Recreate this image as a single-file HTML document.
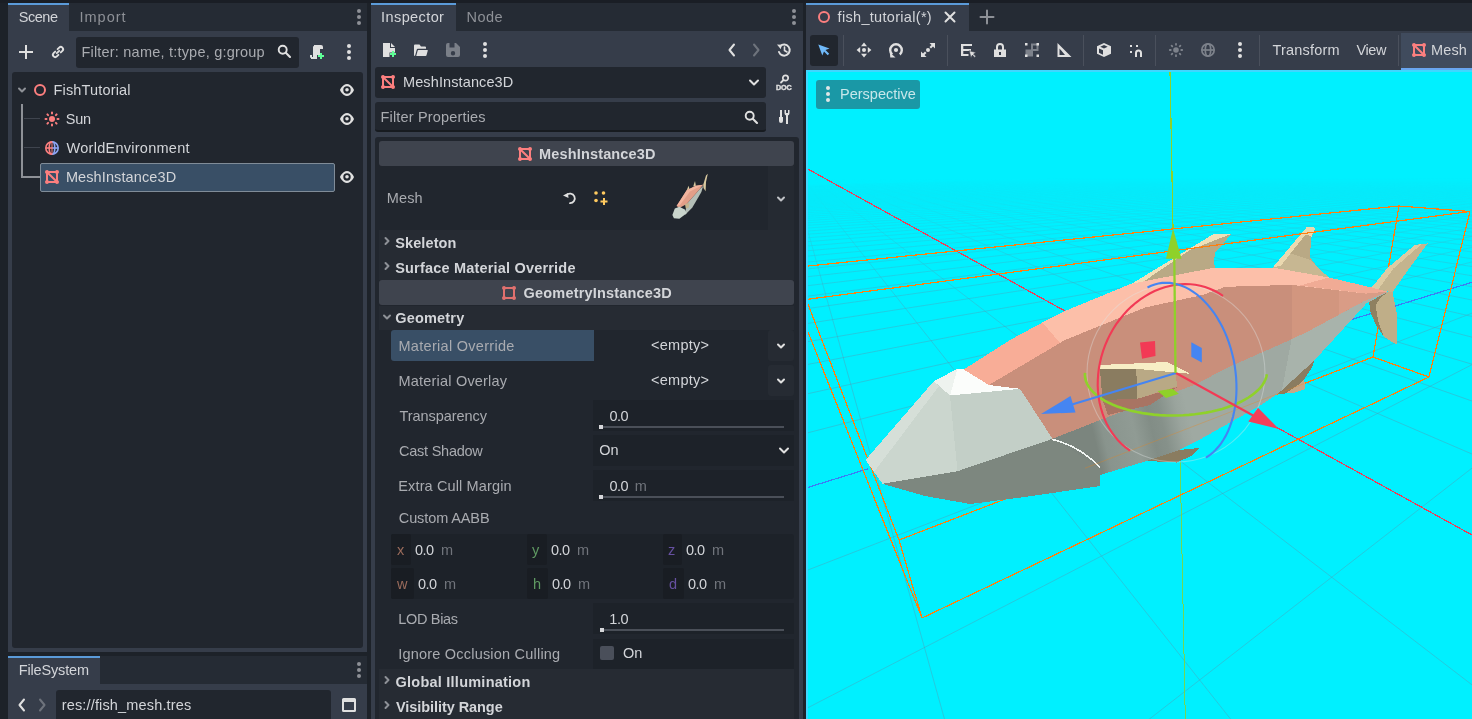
<!DOCTYPE html>
<html lang="en">
<head>
<meta charset="utf-8">
<title>fish_tutorial - Godot Engine</title>
<style>
*{box-sizing:border-box;margin:0;padding:0}
html,body{width:1472px;height:719px;overflow:hidden;background:#1d2229}
body{position:relative;font-family:"Liberation Sans","DejaVu Sans",sans-serif;font-size:14.5px;color:#d3d5d9}
.abs{position:absolute}
.t{position:absolute;white-space:nowrap;line-height:20px;height:20px}
.b{font-weight:bold}
.dim{color:#8e9197}
.lbl{color:#a9abb0}
.unit{color:#70747b}
.panel{position:absolute;background:#363d4a}
.dark{position:absolute;background:#21262e}
.tabbar{position:absolute;background:#252b34}
.tab{position:absolute;background:#363d4a;border-top:2px solid #5b9bd9}
.field{position:absolute;background:#21262e;border-radius:3px}
.val{position:absolute;background:#1d2229}
.cat{position:absolute;background:#3f444e;border-radius:3px}
.sec{position:absolute;background:#262b33}
.axl{position:absolute;background:#191d23;border-radius:2px}
.sl{position:absolute;height:2px;background:#4a4f58}
.gr{position:absolute;width:4px;height:4px;background:#d6d7da}
svg{position:absolute;overflow:visible}
svg.ic{width:16px;height:16px}
</style>
</head>
<body>
<div id="root" style="position:absolute;left:0;top:0;width:1472px;height:719px;will-change:transform">
<!-- ================= LEFT DOCK : Scene ================= -->
<div class="abs" style="left:0;top:0;width:1472px;height:3px;background:#1a1e25"></div>
<div class="tabbar" style="left:8px;top:3px;width:359px;height:28px"></div>
<div class="tab" style="left:8px;top:3px;width:61px;height:28px"></div>
<span class="t" style="left:18.7px;top:7px;letter-spacing:-0.45px">Scene</span>
<span class="t dim" style="left:79.4px;top:7px;letter-spacing:1.03px">Import</span>
<svg class="ic" style="left:351px;top:9px" viewBox="0 0 16 16"><g fill="#8e9197"><circle cx="8" cy="1.900" r="2"/><circle cx="8" cy="8" r="2"/><circle cx="8" cy="14.100" r="2"/></g></svg>
<div class="panel" style="left:8px;top:31px;width:359px;height:621px"></div>
<!-- toolbar -->
<svg class="ic" style="left:18px;top:44px" viewBox="0 0 16 16"><path d="M7 1v6H1v2h6v6h2V9h6V7H9V1z" fill="#e0e0e0"/></svg>
<svg class="ic" style="left:50px;top:44px" viewBox="0 0 16 16"><g fill="none" stroke="#e0e0e0" stroke-width="1.900" stroke-linecap="round"><path d="M6.800 9.200 9.200 6.800"/><path d="M7.600 5.200 9.200 3.600a2.260 2.260 0 0 1 3.200 3.200L10.800 8.400"/><path d="M8.400 10.800 6.800 12.400A2.260 2.260 0 0 1 3.600 9.200L5.200 7.600"/></g></svg>
<div class="field" style="left:76px;top:37px;width:223px;height:31px"></div>
<span class="t lbl" style="left:81.4px;top:42px;letter-spacing:0.21px">Filter: name, t:type, g:group</span>
<svg class="ic" style="left:276px;top:43px" viewBox="0 0 16 16"><circle cx="6.7" cy="6.7" r="4" fill="none" stroke="#e0e0e0" stroke-width="1.9"/><path d="M9.8 9.8 14 14" stroke="#e0e0e0" stroke-width="2.1" stroke-linecap="round"/></svg>
<svg class="ic" style="left:308px;top:44px" viewBox="0 0 16 16"><path d="M6 1v1a1 1 0 0 0-1 1v10H4v-2H2v2a1 1 0 0 0 .5.87A1 1 0 0 0 3 14v1h6v-4h3V5h3V3a2 2 0 0 0-2-2z" fill="#e0e0e0"/><path d="M6 1a1 1 0 0 0-1 1v11H4v-2H2v2a1 1 0 0 0 1 1" fill="none"/><path d="M12 9v2h-2v2h2v2h2v-2h2v-2h-2V9z" fill="#5fff97"/></svg>
<svg class="ic" style="left:341px;top:44px" viewBox="0 0 16 16"><g fill="#e0e0e0"><circle cx="8" cy="2" r="2"/><circle cx="8" cy="8" r="2"/><circle cx="8" cy="14" r="2"/></g></svg>
<!-- tree -->
<div class="dark" style="left:12px;top:72px;width:351px;height:576px;border-radius:3px"></div>
<div class="abs" style="left:40px;top:163px;width:295px;height:29px;background:#394f66;border:1px solid #808c98;border-radius:2px"></div>
<!-- guides -->
<div class="abs" style="left:21px;top:104px;width:2px;height:74px;background:#8e9197"></div>
<div class="abs" style="left:21px;top:176px;width:19px;height:2px;background:#8e9197"></div>
<div class="abs" style="left:24px;top:118px;width:16px;height:1px;background:#3f444e"></div>
<div class="abs" style="left:24px;top:147px;width:16px;height:1px;background:#3f444e"></div>
<svg class="ic" style="left:14px;top:82px" viewBox="0 0 16 16"><path d="M5 6.500 8 9.500 11 6.500" fill="none" stroke="#8e9197" stroke-width="2" stroke-linecap="round" stroke-linejoin="round"/></svg>
<!-- node icons -->
<svg class="ic" style="left:32px;top:82px" viewBox="0 0 16 16"><circle cx="8" cy="8" r="5" fill="none" stroke="#fc7f7f" stroke-width="2"/></svg>
<svg class="ic" style="left:44px;top:111px" viewBox="0 0 16 16"><g fill="#fc7f7f"><circle cx="8" cy="8" r="3"/><g stroke="#fc7f7f" stroke-width="2" stroke-linecap="round"><path d="M8 1.5v1M8 13.5v1M1.5 8h1M13.5 8h1M3.4 3.4l.7.7M11.9 11.9l.7.7M3.4 12.6l.7-.7M11.9 4.1l.7-.7"/></g></g></svg>
<svg class="ic" style="left:44px;top:140px" viewBox="0 0 16 16"><defs><clipPath id="wl"><rect x="0" y="0" width="8" height="16"/></clipPath><clipPath id="wr"><rect x="8" y="0" width="8" height="16"/></clipPath></defs><g fill="none" stroke-width="1.6"><g stroke="#fc7f7f" clip-path="url(#wl)"><circle cx="8" cy="8" r="6.2"/><ellipse cx="8" cy="8" rx="2.8" ry="6.2"/><path d="M2 8h12"/></g><g stroke="#8da5f3" clip-path="url(#wr)"><circle cx="8" cy="8" r="6.2"/><ellipse cx="8" cy="8" rx="2.8" ry="6.2"/><path d="M2 8h12"/></g></g><path d="M8 1.5v13" stroke="#fc7f7f" stroke-width="1"/></svg>
<svg class="ic" style="left:44px;top:169px" viewBox="0 0 16 16"><path d="M3 1a2 2 0 0 0-2 2 2 2 0 0 0 1 1.7v6.6A2 2 0 0 0 1 13a2 2 0 0 0 2 2 2 2 0 0 0 1.7-1h6.6a2 2 0 0 0 1.7 1 2 2 0 0 0 2-2 2 2 0 0 0-1-1.7V4.7A2 2 0 0 0 15 3a2 2 0 0 0-2-2 2 2 0 0 0-1.7 1H4.7A2 2 0 0 0 3 1zm2.4 3h5.9a2 2 0 0 0 .7.7v5.9zM4 5.4 10.6 12H4.7a2 2 0 0 0-.7-.7z" fill="#fc7f7f"/></svg>
<span class="t" style="left:53.6px;top:80px;letter-spacing:0.15px">FishTutorial</span>
<span class="t" style="left:65.7px;top:109px;letter-spacing:-0.23px">Sun</span>
<span class="t" style="left:66.6px;top:138px;letter-spacing:0.26px">WorldEnvironment</span>
<span class="t" style="left:65.9px;top:167px;letter-spacing:0.11px">MeshInstance3D</span>
<!-- eyes -->
<svg class="ic" style="left:339px;top:82px" viewBox="0 0 16 16"><path d="M8 2C3.500 2 1 8 1 8s2.500 6 7 6 7-6 7-6-2.500-6-7-6zm0 2.300a3.700 3.700 0 0 1 0 7.400 3.700 3.700 0 0 1 0-7.400zm0 1.700a1.800 1.800 0 0 0 0 3.600 1.800 1.800 0 0 0 0-3.600z" fill="#e0e0e0"/></svg>
<svg class="ic" style="left:339px;top:111px" viewBox="0 0 16 16"><path d="M8 2C3.500 2 1 8 1 8s2.500 6 7 6 7-6 7-6-2.500-6-7-6zm0 2.300a3.700 3.700 0 0 1 0 7.400 3.700 3.700 0 0 1 0-7.400zm0 1.700a1.800 1.800 0 0 0 0 3.600 1.800 1.800 0 0 0 0-3.600z" fill="#e0e0e0"/></svg>
<svg class="ic" style="left:339px;top:169px" viewBox="0 0 16 16"><path d="M8 2C3.500 2 1 8 1 8s2.500 6 7 6 7-6 7-6-2.500-6-7-6zm0 2.300a3.700 3.700 0 0 1 0 7.400 3.700 3.700 0 0 1 0-7.400zm0 1.700a1.800 1.800 0 0 0 0 3.600 1.800 1.800 0 0 0 0-3.600z" fill="#e0e0e0"/></svg>

<!-- ================= LEFT DOCK : FileSystem ================= -->
<div class="tabbar" style="left:8px;top:656px;width:359px;height:28px"></div>
<div class="tab" style="left:8px;top:656px;width:92px;height:28px"></div>
<span class="t" style="left:18.8px;top:660px;letter-spacing:-0.17px">FileSystem</span>
<svg class="ic" style="left:351px;top:662px" viewBox="0 0 16 16"><g fill="#8e9197"><circle cx="8" cy="1.900" r="2"/><circle cx="8" cy="8" r="2"/><circle cx="8" cy="14.100" r="2"/></g></svg>
<div class="panel" style="left:8px;top:684px;width:359px;height:40px"></div>
<svg class="ic" style="left:14px;top:697px" viewBox="0 0 16 16"><path d="M10 2.500 5.500 8 10 13.500" fill="none" stroke="#e0e0e0" stroke-width="2" stroke-linecap="round" stroke-linejoin="round"/></svg>
<svg class="ic" style="left:34px;top:697px" viewBox="0 0 16 16"><path d="M6 2.500 10.500 8 6 13.500" fill="none" stroke="#6e737c" stroke-width="2" stroke-linecap="round" stroke-linejoin="round"/></svg>
<div class="field" style="left:56px;top:690px;width:275px;height:34px"></div>
<span class="t" style="left:61.7px;top:695px;letter-spacing:0.16px">res://fish_mesh.tres</span>
<svg class="ic" style="left:341px;top:697px" viewBox="0 0 16 16"><path d="M2.500 1h11A1.500 1.500 0 0 1 15 2.500v11a1.500 1.500 0 0 1-1.500 1.500h-11A1.500 1.500 0 0 1 1 13.500v-11A1.500 1.500 0 0 1 2.500 1zM3 5v8h10V5z" fill="#e0e0e0" fill-rule="evenodd"/></svg>
<!-- ================= MIDDLE DOCK : Inspector ================= -->
<div class="tabbar" style="left:371px;top:3px;width:432px;height:28px"></div>
<div class="tab" style="left:371px;top:3px;width:85px;height:28px"></div>
<span class="t" style="left:381.1px;top:7px;letter-spacing:0.40px">Inspector</span>
<span class="t dim" style="left:466.6px;top:7px;letter-spacing:0.42px">Node</span>
<svg class="ic" style="left:786px;top:9px" viewBox="0 0 16 16"><g fill="#8e9197"><circle cx="8" cy="1.900" r="2"/><circle cx="8" cy="8" r="2"/><circle cx="8" cy="14.100" r="2"/></g></svg>
<div class="panel" style="left:371px;top:31px;width:432px;height:700px"></div>
<!-- toolbar icons -->
<svg class="ic" style="left:381px;top:42px" viewBox="0 0 16 16"><path d="M2 1v14h6.500v-4.500H14V6H9V1zm8 0v4h4z" fill="#e0e0e0"/><path d="M11 9v2H9v2h2v2h2v-2h2v-2h-2V9z" fill="#5fff97"/></svg>
<svg class="ic" style="left:413px;top:42px" viewBox="0 0 16 16"><path d="M2 2.500a1 1 0 0 0-1 1V13a1 1 0 0 0 1 1l1.800-6.500a1 1 0 0 1 1-.7H13V5.500a1 1 0 0 0-1-1H8L6.500 2.500z" fill="#e0e0e0"/><path d="M5.300 8a.6.6 0 0 0-.6.450L3.200 14H12.500a1 1 0 0 0 1-.750l1.300-4.700A.45.450 0 0 0 14.400 8z" fill="#e0e0e0"/></svg>
<svg class="ic" style="left:445px;top:42px" viewBox="0 0 16 16"><path d="M3 1a2 2 0 0 0-2 2v10a2 2 0 0 0 2 2h10a2 2 0 0 0 2-2V5l-4-4H9.500v4.500h-5V1zm5 8a2.200 2.200 0 0 1 0 4.400A2.200 2.200 0 0 1 8 9z" fill="#7a7f88" fill-rule="evenodd"/></svg>
<svg class="ic" style="left:477px;top:42px" viewBox="0 0 16 16"><g fill="#e0e0e0"><circle cx="8" cy="2" r="2"/><circle cx="8" cy="8" r="2"/><circle cx="8" cy="14" r="2"/></g></svg>
<svg class="ic" style="left:724px;top:42px" viewBox="0 0 16 16"><path d="M10 2.500 5.500 8 10 13.500" fill="none" stroke="#e0e0e0" stroke-width="2" stroke-linecap="round" stroke-linejoin="round"/></svg>
<svg class="ic" style="left:748px;top:42px" viewBox="0 0 16 16"><path d="M6 2.500 10.500 8 6 13.500" fill="none" stroke="#6e737c" stroke-width="2" stroke-linecap="round" stroke-linejoin="round"/></svg>
<svg class="ic" style="left:776px;top:42px" viewBox="0 0 16 16"><path d="M4.200 4.300A5.500 5.500 0 1 1 3 10" fill="none" stroke="#e0e0e0" stroke-width="2" stroke-linecap="round"/><path d="M1 2.500 5.800 2.800 4.800 7.200z" fill="#e0e0e0"/><path d="M8.500 5v3.500l2.500 1.500" fill="none" stroke="#e0e0e0" stroke-width="1.600" stroke-linecap="round"/></svg>
<!-- object selector -->
<div class="field" style="left:375px;top:67px;width:391px;height:31px"></div>
<svg class="ic" style="left:380px;top:74px" viewBox="0 0 16 16"><path d="M3 1a2 2 0 0 0-2 2 2 2 0 0 0 1 1.700v6.600A2 2 0 0 0 1 13a2 2 0 0 0 2 2 2 2 0 0 0 1.700-1h6.600a2 2 0 0 0 1.700 1 2 2 0 0 0 2-2 2 2 0 0 0-1-1.700V4.700A2 2 0 0 0 15 3a2 2 0 0 0-2-2 2 2 0 0 0-1.700 1H4.700A2 2 0 0 0 3 1zm2.400 3h5.900a2 2 0 0 0 .7.700v5.900zM4 5.400 10.600 12H4.700a2 2 0 0 0-.7-.7z" fill="#fc7f7f"/></svg>
<span class="t" style="left:403px;top:72px;letter-spacing:0.11px">MeshInstance3D</span>
<svg class="ic" style="left:746px;top:74px" viewBox="0 0 16 16"><path d="M4 6.500 8 10.500 12 6.500" fill="none" stroke="#e0e0e0" stroke-width="2" stroke-linecap="round" stroke-linejoin="round"/></svg>
<svg class="ic" style="left:776px;top:74px" viewBox="0 0 16 16"><circle cx="9.500" cy="4" r="2.700" fill="none" stroke="#e0e0e0" stroke-width="1.700"/><path d="M7.500 6 5 8.500" stroke="#e0e0e0" stroke-width="1.800" stroke-linecap="round"/><text x="0" y="15.500" font-family="Liberation Sans,sans-serif" font-weight="bold" font-size="7.200" fill="#e0e0e0" stroke="#e0e0e0" stroke-width="0.350" letter-spacing="-0.150">DOC</text></svg>
<!-- filter -->
<div class="field" style="left:375px;top:102px;width:391px;height:30px;border-bottom:2px solid #171b20"></div>
<span class="t lbl" style="left:380.6px;top:107px;letter-spacing:0.16px">Filter Properties</span>
<svg class="ic" style="left:743px;top:109px" viewBox="0 0 16 16"><circle cx="6.700" cy="6.700" r="4" fill="none" stroke="#e0e0e0" stroke-width="1.900"/><path d="M9.800 9.800 14 14" stroke="#e0e0e0" stroke-width="2.100" stroke-linecap="round"/></svg>
<svg class="ic" style="left:776px;top:109px" viewBox="0 0 16 16"><g fill="#e0e0e0"><path d="M4 1h2v8H4z"/><path d="M3 8h4v4a2 2 0 0 1-4 0z"/><path d="M10 6h2v9h-2z"/><path d="M8.500 1v3a2.500 2.500 0 0 0 5 0V1h-1.500v3h-2V1z"/></g></svg>
<!-- scroll area -->
<div class="dark" style="left:375px;top:137px;width:424px;height:600px;border-radius:3px"></div>
<div class="cat" style="left:379px;top:141px;width:415px;height:25px"></div>
<svg class="ic" style="left:517px;top:146px" viewBox="0 0 16 16"><path d="M3 1a2 2 0 0 0-2 2 2 2 0 0 0 1 1.700v6.600A2 2 0 0 0 1 13a2 2 0 0 0 2 2 2 2 0 0 0 1.700-1h6.600a2 2 0 0 0 1.700 1 2 2 0 0 0 2-2 2 2 0 0 0-1-1.700V4.700A2 2 0 0 0 15 3a2 2 0 0 0-2-2 2 2 0 0 0-1.700 1H4.700A2 2 0 0 0 3 1zm2.400 3h5.900a2 2 0 0 0 .7.700v5.900zM4 5.400 10.600 12H4.700a2 2 0 0 0-.7-.7z" fill="#fc7f7f"/></svg>
<span class="t b" style="left:539.1px;top:144px;letter-spacing:0.15px">MeshInstance3D</span>
<!-- Mesh row -->
<span class="t lbl" style="left:386.7px;top:188px;letter-spacing:0.16px">Mesh</span>
<div class="abs" style="left:768px;top:166px;width:26px;height:64px;background:#252a32"></div>
<svg class="ic" style="left:562px;top:190px" viewBox="0 0 16 16"><path d="M4.400 5.200A4.800 4.800 0 1 1 8 13.200" fill="none" stroke="#e0e0e0" stroke-width="1.800" stroke-linecap="round"/><path d="M1 5.500 6 3l.5 5z" fill="#e0e0e0"/></svg>
<svg class="ic" style="left:593px;top:190px" viewBox="0 0 16 16"><g fill="#ffca5f"><circle cx="3" cy="3" r="1.800"/><circle cx="10.500" cy="3" r="1.800"/><circle cx="3" cy="10.500" r="1.800"/><path d="M10 8h2v2.500h2.500v2H12V15h-2v-2.500H7.500v-2H10z"/></g></svg>
<svg class="ic" style="left:773px;top:191px" viewBox="0 0 16 16"><path d="M5 6.500 8 9.500 11 6.500" fill="none" stroke="#c0c2c6" stroke-width="2" stroke-linecap="round" stroke-linejoin="round"/></svg>
<!-- mini fish preview -->
<svg style="left:668px;top:170px;width:46px;height:54px" viewBox="668 170 46 54">
<path d="M703.200 184.800 706 175.600 707.800 173.800 706 182 705.600 191.200 703.500 188z" fill="#d9c9a0"/>
<path d="M686.700 190.300 688.600 185.700 689.500 189.300z" fill="#d9c9a0"/>
<path d="M693.200 186.600 695 181.100 695.900 185.700z" fill="#d9c9a0"/>
<path d="M703.200 185.700 701.400 192.100 692.200 207.700 684.900 215 686.700 204 699.600 189.300z" fill="#b4beb7"/>
<path d="M676.600 205.900 686.700 190.300 695.900 185.700 703.200 184.800 699.600 189.300 686.700 204 679.400 208z" fill="#e39e88"/>
<path d="M676.600 205.900 686.700 190.300 695.900 185.700 703.200 184.800 690 191.500 680 205z" fill="#f3b49e"/>
<path d="M672.400 215 674.800 208.600 679.400 206.800 684.900 209.500 686.700 213.200 679.400 218.700 673.900 218.300z" fill="#c9d4cc"/>
<path d="M684.900 204 689.500 203.100 688.600 207.700 685.800 208.600z" fill="#c4b48e"/>
</svg>
<!-- sections -->
<div class="sec" style="left:379px;top:230px;width:415px;height:25px"></div>
<svg class="ic" style="left:379px;top:233px" viewBox="0 0 16 16"><path d="M6.500 5 9.500 8 6.500 11" fill="none" stroke="#8e9197" stroke-width="2" stroke-linecap="round" stroke-linejoin="round"/></svg>
<span class="t b" style="left:395.2px;top:233px;letter-spacing:0.11px">Skeleton</span>
<div class="sec" style="left:379px;top:255px;width:415px;height:25px"></div>
<svg class="ic" style="left:379px;top:258px" viewBox="0 0 16 16"><path d="M6.500 5 9.500 8 6.500 11" fill="none" stroke="#8e9197" stroke-width="2" stroke-linecap="round" stroke-linejoin="round"/></svg>
<span class="t b" style="left:395.2px;top:258px;letter-spacing:0.19px">Surface Material Override</span>
<div class="cat" style="left:379px;top:280px;width:415px;height:25px"></div>
<svg class="ic" style="left:501px;top:285px" viewBox="0 0 16 16"><path d="M3 1a2 2 0 0 0-2 2 2 2 0 0 0 1 1.700v6.600A2 2 0 0 0 1 13a2 2 0 0 0 2 2 2 2 0 0 0 1.700-1h6.600a2 2 0 0 0 1.700 1 2 2 0 0 0 2-2 2 2 0 0 0-1-1.700V4.700A2 2 0 0 0 15 3a2 2 0 0 0-2-2 2 2 0 0 0-1.700 1H4.700A2 2 0 0 0 3 1zm1.700 3h6.600a2 2 0 0 0 .7.700v6.600a2 2 0 0 0-.7.700H4.700a2 2 0 0 0-.7-.7V4.700A2 2 0 0 0 4.700 4z" fill="#e0706e" fill-rule="evenodd"/></svg>
<span class="t b" style="left:523.6px;top:283px;letter-spacing:0.18px">GeometryInstance3D</span>
<div class="sec" style="left:379px;top:306px;width:415px;height:24px"></div>
<svg class="ic" style="left:379px;top:309px" viewBox="0 0 16 16"><path d="M5 6.500 8 9.500 11 6.500" fill="none" stroke="#8e9197" stroke-width="2" stroke-linecap="round" stroke-linejoin="round"/></svg>
<span class="t b" style="left:395.2px;top:308px;letter-spacing:0.19px">Geometry</span>
<!-- Material Override -->
<div class="abs" style="left:391px;top:330px;width:203px;height:31px;background:#394f66;border-radius:3px 0 0 3px"></div>
<span class="t lbl" style="left:398.5px;top:336px;letter-spacing:0.29px">Material Override</span>
<div class="abs" style="left:768px;top:330px;width:26px;height:31px;background:#262b33;border-radius:3px"></div>
<span class="t" style="left:651.1px;top:335px;letter-spacing:0.23px">&lt;empty&gt;</span>
<svg class="ic" style="left:773px;top:338px" viewBox="0 0 16 16"><path d="M5 6.500 8 9.500 11 6.500" fill="none" stroke="#e0e0e0" stroke-width="2" stroke-linecap="round" stroke-linejoin="round"/></svg>
<!-- Material Overlay -->
<span class="t lbl" style="left:398.5px;top:371px;letter-spacing:0.20px">Material Overlay</span>
<div class="abs" style="left:768px;top:365px;width:26px;height:31px;background:#262b33;border-radius:3px"></div>
<span class="t" style="left:651.1px;top:370px;letter-spacing:0.23px">&lt;empty&gt;</span>
<svg class="ic" style="left:773px;top:373px" viewBox="0 0 16 16"><path d="M5 6.500 8 9.500 11 6.500" fill="none" stroke="#e0e0e0" stroke-width="2" stroke-linecap="round" stroke-linejoin="round"/></svg>
<!-- Transparency -->
<span class="t lbl" style="left:399.4px;top:406px;letter-spacing:-0.05px">Transparency</span>
<div class="val" style="left:593px;top:400px;width:201px;height:31px"></div>
<span class="t" style="left:609.4px;top:406px;letter-spacing:-0.53px">0.0</span>
<div class="sl" style="left:601px;top:426px;width:183px"></div><div class="gr" style="left:599px;top:425px"></div>
<!-- Cast Shadow -->
<span class="t lbl" style="left:399.0px;top:441px;letter-spacing:-0.24px">Cast Shadow</span>
<div class="val" style="left:593px;top:435px;width:201px;height:31px"></div>
<span class="t" style="left:599.3px;top:440px;letter-spacing:0.03px">On</span>
<svg class="ic" style="left:776px;top:442px" viewBox="0 0 16 16"><path d="M4 6.500 8 10.500 12 6.500" fill="none" stroke="#e0e0e0" stroke-width="2" stroke-linecap="round" stroke-linejoin="round"/></svg>
<!-- Extra Cull Margin -->
<span class="t lbl" style="left:398.3px;top:476px;letter-spacing:0.13px">Extra Cull Margin</span>
<div class="val" style="left:593px;top:470px;width:201px;height:31px"></div>
<span class="t" style="left:609.4px;top:476px;letter-spacing:-0.53px">0.0</span><span class="t unit" style="left:634.7px;top:476px;letter-spacing:0.00px">m</span>
<div class="sl" style="left:601px;top:496px;width:183px"></div><div class="gr" style="left:599px;top:495px"></div>
<!-- Custom AABB -->
<span class="t lbl" style="left:398.8px;top:508px;letter-spacing:-0.11px">Custom AABB</span>
<div class="val" style="left:391px;top:534px;width:403px;height:65px;border-radius:3px"></div>
<div class="axl" style="left:391px;top:534px;width:20px;height:31px"></div>
<div class="axl" style="left:527px;top:534px;width:20px;height:31px"></div>
<div class="axl" style="left:663px;top:534px;width:19px;height:31px"></div>
<div class="axl" style="left:391px;top:568px;width:23px;height:31px"></div>
<div class="axl" style="left:527px;top:568px;width:21px;height:31px"></div>
<div class="axl" style="left:663px;top:568px;width:21px;height:31px"></div>
<span class="t" style="left:397px;top:540px;color:#9a6b5b">x</span><span class="t" style="left:415px;top:540px;letter-spacing:-0.53px">0.0</span><span class="t unit" style="left:441px;top:540px;letter-spacing:0.00px">m</span>
<span class="t" style="left:532px;top:540px;color:#5f9962">y</span><span class="t" style="left:551px;top:540px;letter-spacing:-0.53px">0.0</span><span class="t unit" style="left:577px;top:540px;letter-spacing:0.00px">m</span>
<span class="t" style="left:668px;top:540px;color:#6650a0">z</span><span class="t" style="left:686px;top:540px;letter-spacing:-0.53px">0.0</span><span class="t unit" style="left:712px;top:540px;letter-spacing:0.00px">m</span>
<span class="t" style="left:397px;top:574px;color:#9a6b5b">w</span><span class="t" style="left:418px;top:574px;letter-spacing:-0.53px">0.0</span><span class="t unit" style="left:444px;top:574px;letter-spacing:0.00px">m</span>
<span class="t" style="left:533px;top:574px;color:#5f9962">h</span><span class="t" style="left:552px;top:574px;letter-spacing:-0.53px">0.0</span><span class="t unit" style="left:578px;top:574px;letter-spacing:0.00px">m</span>
<span class="t" style="left:669px;top:574px;color:#6650a0">d</span><span class="t" style="left:688px;top:574px;letter-spacing:-0.53px">0.0</span><span class="t unit" style="left:714px;top:574px;letter-spacing:0.00px">m</span>
<!-- LOD Bias -->
<span class="t lbl" style="left:398.3px;top:609px;letter-spacing:-0.33px">LOD Bias</span>
<div class="val" style="left:593px;top:603px;width:201px;height:31px"></div>
<span class="t" style="left:609.3px;top:609px;letter-spacing:-0.46px">1.0</span>
<div class="sl" style="left:601px;top:629px;width:183px"></div><div class="gr" style="left:600px;top:628px"></div>
<!-- Ignore Occlusion Culling -->
<span class="t lbl" style="left:398.2px;top:644px;letter-spacing:0.21px">Ignore Occlusion Culling</span>
<div class="val" style="left:593px;top:639px;width:201px;height:30px"></div>
<div class="abs" style="left:600px;top:646px;width:14px;height:14px;background:#4a4f5a;border-radius:2px"></div>
<span class="t" style="left:623px;top:643px;letter-spacing:0.03px">On</span>
<!-- bottom sections -->
<div class="sec" style="left:379px;top:669px;width:415px;height:25px"></div>
<svg class="ic" style="left:379px;top:672px" viewBox="0 0 16 16"><path d="M6.500 5 9.500 8 6.500 11" fill="none" stroke="#8e9197" stroke-width="2" stroke-linecap="round" stroke-linejoin="round"/></svg>
<span class="t b" style="left:395.5px;top:672px;letter-spacing:0.24px">Global Illumination</span>
<div class="sec" style="left:379px;top:694px;width:415px;height:25px"></div>
<svg class="ic" style="left:379px;top:697px" viewBox="0 0 16 16"><path d="M6.500 5 9.500 8 6.500 11" fill="none" stroke="#8e9197" stroke-width="2" stroke-linecap="round" stroke-linejoin="round"/></svg>
<span class="t b" style="left:395.9px;top:697px;letter-spacing:-0.06px">Visibility Range</span>
<!-- ================= RIGHT : scene tabs + toolbar ================= -->
<div class="tabbar" style="left:806px;top:3px;width:670px;height:28px"></div>
<div class="tab" style="left:806px;top:3px;width:163px;height:28px"></div>
<svg class="ic" style="left:816px;top:9px" viewBox="0 0 16 16"><circle cx="8" cy="8" r="5" fill="none" stroke="#fc7f7f" stroke-width="2"/></svg>
<span class="t" style="left:837.6px;top:7px;letter-spacing:0.31px">fish_tutorial(*)</span>
<svg class="ic" style="left:942px;top:9px" viewBox="0 0 16 16"><path d="M3.500 3.500 12.500 12.500M12.500 3.500 3.500 12.500" stroke="#e0e0e0" stroke-width="2" stroke-linecap="round"/></svg>
<svg class="ic" style="left:979px;top:9px" viewBox="0 0 16 16"><path d="M8 1.500v13M1.500 8h13" stroke="#8e9197" stroke-width="2" stroke-linecap="round"/></svg>
<div class="panel" style="left:806px;top:31px;width:670px;height:39px"></div>
<div class="abs" style="left:810px;top:35px;width:28px;height:31px;background:#21262e;border-radius:3px"></div>
<svg class="ic" style="left:816px;top:42px" viewBox="0 0 16 16"><path d="M2.300 2.600 6.300 13.600 8 9.600l3.700 3.700 1.500-1.500L9.500 8.100l4-1.700z" fill="#70bafa"/></svg>
<div class="abs" style="left:843px;top:35px;width:1px;height:31px;background:#4a505c"></div>
<svg class="ic" style="left:856px;top:42px" viewBox="0 0 16 16"><g fill="#e0e0e0"><circle cx="8" cy="8" r="2"/><path d="M8 .600 11 4.200H5zM8 15.400 5 11.800h6zM.600 8 4.200 5v6zM15.400 8 11.800 11V5z"/></g></svg>
<svg class="ic" style="left:888px;top:42px" viewBox="0 0 16 16"><circle cx="8" cy="8" r="2.100" fill="#e0e0e0"/><path d="M4.200 12.500A5.800 5.800 0 1 1 11.800 12.500" fill="none" stroke="#e0e0e0" stroke-width="2.400"/><path d="M1.800 10.500 2.300 15.500H7.500z" fill="#e0e0e0"/></svg>
<svg class="ic" style="left:920px;top:42px" viewBox="0 0 16 16"><g fill="#e0e0e0"><circle cx="8" cy="8" r="2"/><path d="M9.500 1H15v5.500l-2-2-2 2L9.500 5l2-2zM1 9.500l2 2 2-2L6.500 11l-2 2 2 2H1z"/></g></svg>
<div class="abs" style="left:947px;top:35px;width:1px;height:31px;background:#4a505c"></div>
<svg class="ic" style="left:960px;top:42px" viewBox="0 0 16 16"><path d="M1 2h11v2H3.300v3H11v2H3.300v3H8.500v2H1z" fill="#e0e0e0"/><path d="M9.200 8.700 11 15.700l1.400-2.600 2.300 2.300 1.100-1.100-2.300-2.300 2.600-1.400z" fill="#e0e0e0" stroke="#363d4a" stroke-width="0.600"/></svg>
<svg class="ic" style="left:992px;top:42px" viewBox="0 0 16 16"><path d="M8 1a4 4 0 0 0-4 4v2.500H2V15h12V7.500h-2V5a4 4 0 0 0-4-4zm0 2a2 2 0 0 1 2 2v2.500H6V5a2 2 0 0 1 2-2zM7 10h2v3H7z" fill="#e0e0e0" fill-rule="evenodd"/></svg>
<svg class="ic" style="left:1024px;top:42px" viewBox="0 0 16 16"><path d="M7 1.500v6H1.500v7H9V9h5.500V1.500zm2 2h3.500V7H9z" fill="#7d828b" fill-rule="evenodd"/><g fill="#e0e0e0"><path d="M1 1h2.500v2.500H1zM12.500 1H15v2.500h-2.500zM1 12.500h2.500V15H1zM12.500 12.500H15V15h-2.500z"/></g></svg>
<svg class="ic" style="left:1056px;top:42px" viewBox="0 0 16 16"><path d="M1.500 1v14h14zm2 5.500 5.500 6.500H3.500z" fill="#e0e0e0" fill-rule="evenodd"/></svg>
<div class="abs" style="left:1083px;top:35px;width:1px;height:31px;background:#4a505c"></div>
<svg class="ic" style="left:1096px;top:42px" viewBox="0 0 16 16"><path d="M8 .900 1 4.200v7.600l7 3.300 7-3.300V4.200zM8 3.100l3.700 1.700L8 6.600 4.300 4.800zM3 6.400l4 1.900v4.400l-4-1.900z" fill="#e0e0e0" fill-rule="evenodd"/></svg>
<svg class="ic" style="left:1128px;top:42px" viewBox="0 0 16 16"><g fill="#e0e0e0"><path d="M2 3h2v2H2zM8 3h2v2H8zM2 9h2v2H2z"/><path d="M7 15V11a3.500 3.500 0 0 1 7 0v4h-2v-4a1.500 1.500 0 0 0-3 0v4z"/></g></svg>
<div class="abs" style="left:1155px;top:35px;width:1px;height:31px;background:#4a505c"></div>
<svg class="ic" style="left:1168px;top:42px" viewBox="0 0 16 16"><g fill="#7d828b"><circle cx="8" cy="8" r="2.800"/><g stroke="#7d828b" stroke-width="1.800" stroke-linecap="round"><path d="M8 1.800v1M8 13.200v1M1.800 8h1M13.200 8h1M3.600 3.600l.7.700M11.700 11.700l.7.700M3.600 12.400l.7-.7M11.700 4.300l.7-.7"/></g></g></svg>
<svg class="ic" style="left:1200px;top:42px" viewBox="0 0 16 16"><g fill="none" stroke="#7d828b" stroke-width="1.700"><circle cx="8" cy="8" r="6.200"/><ellipse cx="8" cy="8" rx="2.700" ry="6.200"/><path d="M2 8h12"/></g></svg>
<svg class="ic" style="left:1232px;top:42px" viewBox="0 0 16 16"><g fill="#e0e0e0"><circle cx="8" cy="2" r="2"/><circle cx="8" cy="8" r="2"/><circle cx="8" cy="14" r="2"/></g></svg>
<div class="abs" style="left:1259px;top:35px;width:1px;height:31px;background:#4a505c"></div>
<span class="t" style="left:1272.6px;top:40px;letter-spacing:0.18px">Transform</span>
<span class="t" style="left:1356.4px;top:40px;letter-spacing:-0.36px">View</span>
<div class="abs" style="left:1398px;top:35px;width:1px;height:31px;background:#4a505c"></div>
<div class="abs" style="left:1401px;top:33px;width:75px;height:37px;background:#404b5d;border-bottom:2px solid #69a5f0"></div>
<svg class="ic" style="left:1411px;top:42px" viewBox="0 0 16 16"><path d="M3 1a2 2 0 0 0-2 2 2 2 0 0 0 1 1.700v6.600A2 2 0 0 0 1 13a2 2 0 0 0 2 2 2 2 0 0 0 1.700-1h6.600a2 2 0 0 0 1.700 1 2 2 0 0 0 2-2 2 2 0 0 0-1-1.700V4.700A2 2 0 0 0 15 3a2 2 0 0 0-2-2 2 2 0 0 0-1.700 1H4.700A2 2 0 0 0 3 1zm2.400 3h5.900a2 2 0 0 0 .7.700v5.900zM4 5.400 10.600 12H4.700a2 2 0 0 0-.7-.7z" fill="#fc7f7f"/></svg>
<span class="t" style="left:1431px;top:40px;letter-spacing:0.16px">Mesh</span>
<!-- ================= 3D VIEWPORT ================= -->
<div class="abs" style="left:806px;top:70px;width:666px;height:649px;background:#00f0ff;overflow:hidden">
<svg style="left:0;top:0;width:666px;height:649px" viewBox="806 70 666 649" shape-rendering="auto">
<defs><linearGradient id="gf" x1="0" y1="178" x2="0" y2="360" gradientUnits="userSpaceOnUse"><stop offset="0" stop-color="#fff" stop-opacity="0"/><stop offset="0.12" stop-color="#fff" stop-opacity="0.15"/><stop offset="0.3" stop-color="#fff" stop-opacity="0.45"/><stop offset="0.6" stop-color="#fff" stop-opacity="0.8"/><stop offset="1" stop-color="#fff" stop-opacity="1"/></linearGradient><mask id="gm" maskUnits="userSpaceOnUse" x="806" y="70" width="666" height="649"><rect x="806" y="70" width="666" height="649" fill="url(#gf)"/></mask>
<linearGradient id="bel" x1="1096" y1="445" x2="1190" y2="423" gradientUnits="userSpaceOnUse"><stop offset="0" stop-color="#7b857e"/><stop offset="0.1" stop-color="#89948d"/><stop offset="0.42" stop-color="#909b94"/><stop offset="0.6" stop-color="#828d86"/><stop offset="0.72" stop-color="#86918a"/><stop offset="0.9" stop-color="#9aa49d"/><stop offset="1" stop-color="#9fa9a2"/></linearGradient><linearGradient id="sky" x1="0" y1="70" x2="0" y2="719" gradientUnits="userSpaceOnUse"><stop offset="0" stop-color="#00eefe"/><stop offset="1" stop-color="#00f2ff"/></linearGradient></defs>
<g mask="url(#gm)"><path d="M1151.5 171.2L55311.5 1837.0M1145.8 171.2L54453.5 1837.0M1140.0 171.2L53595.5 1837.0M1134.3 171.2L52737.5 1837.0M1128.6 171.2L51879.5 1837.0M1122.9 171.2L51021.5 1837.0M1117.2 171.2L50163.5 1837.0M1111.5 171.2L49305.5 1837.0M1105.7 171.2L48447.5 1837.0M1100.0 171.2L47589.5 1837.0M1094.3 171.2L46731.5 1837.0M1088.6 171.2L45873.5 1837.0M1082.8 171.2L45015.5 1837.0M1077.1 171.2L44157.5 1837.0M1071.4 171.2L43299.5 1837.0M1065.7 171.2L42441.5 1837.0M1060.0 171.2L41583.5 1837.0M1054.2 171.2L40725.5 1837.0M1048.5 171.2L39867.5 1837.0M1042.8 171.2L39009.5 1837.0M1037.1 171.2L38151.5 1837.0M1031.4 171.2L37293.5 1837.0M1025.7 171.2L36435.5 1837.0M1019.9 171.2L35577.5 1837.0M1014.2 171.2L34719.5 1837.0M1008.5 171.2L33861.5 1837.0M1002.8 171.2L33003.5 1837.0M997.0 171.2L32145.5 1837.0M991.3 171.2L31287.5 1837.0M985.6 171.2L30429.5 1837.0M979.9 171.2L29571.5 1837.0M974.2 171.2L28713.5 1837.0M968.5 171.2L27855.5 1837.0M962.7 171.2L26997.5 1837.0M957.0 171.2L26139.5 1837.0M951.3 171.2L25281.5 1837.0M945.6 171.2L24423.5 1837.0M939.9 171.2L23565.5 1837.0M934.1 171.2L22707.5 1837.0M928.4 171.2L21849.5 1837.0M922.7 171.2L20991.5 1837.0M917.0 171.2L20133.5 1837.0M911.2 171.2L19275.5 1837.0M905.5 171.2L18417.5 1837.0M899.8 171.2L17559.5 1837.0M894.1 171.2L16701.5 1837.0M888.4 171.2L15843.5 1837.0M882.6 171.2L14985.5 1837.0M876.9 171.2L14127.5 1837.0M871.2 171.2L13269.5 1837.0M865.5 171.2L12411.5 1837.0M859.8 171.2L11553.5 1837.0M854.0 171.2L10695.5 1837.0M848.3 171.2L9837.5 1837.0M842.6 171.2L8979.5 1837.0M836.9 171.2L8121.5 1837.0M831.2 171.2L7263.5 1837.0M825.5 171.2L6405.5 1837.0M819.7 171.2L5547.5 1837.0M814.0 171.2L4689.5 1837.0M802.6 171.2L2973.5 1837.0M796.9 171.2L2115.5 1837.0M791.1 171.2L1257.5 1837.0M785.4 171.2L399.5 1837.0M779.7 171.2L-458.5 1837.0M774.0 171.2L-1316.5 1837.0M768.2 171.2L-2174.5 1837.0M762.5 171.2L-3032.5 1837.0M756.8 171.2L-3890.5 1837.0M751.1 171.2L-4748.5 1837.0M745.4 171.2L-5606.5 1837.0M1395.6 171.2L-68989.0 1837.0M1402.9 171.2L-67898.5 1837.0M1410.2 171.2L-66808.0 1837.0M1417.4 171.2L-65717.5 1837.0M1424.7 171.2L-64627.0 1837.0M1432.0 171.2L-63536.5 1837.0M1439.2 171.2L-62446.0 1837.0M1446.5 171.2L-61355.5 1837.0M1453.8 171.2L-60265.0 1837.0M1461.0 171.2L-59174.5 1837.0M1468.3 171.2L-58084.0 1837.0M1475.6 171.2L-56993.5 1837.0M1482.9 171.2L-55903.0 1837.0M1490.1 171.2L-54812.5 1837.0M1497.4 171.2L-53722.0 1837.0M1504.7 171.2L-52631.5 1837.0M1511.9 171.2L-51541.0 1837.0M1519.2 171.2L-50450.5 1837.0M1526.5 171.2L-49360.0 1837.0M1533.8 171.2L-48269.5 1837.0M1541.0 171.2L-47179.0 1837.0M1548.3 171.2L-46088.5 1837.0M1555.6 171.2L-44998.0 1837.0M1562.8 171.2L-43907.5 1837.0M1570.1 171.2L-42817.0 1837.0M1577.4 171.2L-41726.5 1837.0M1584.6 171.2L-40636.0 1837.0M1591.9 171.2L-39545.5 1837.0M1599.2 171.2L-38455.0 1837.0M1606.5 171.2L-37364.5 1837.0M1613.7 171.2L-36274.0 1837.0M1621.0 171.2L-35183.5 1837.0M1628.3 171.2L-34093.0 1837.0M1635.5 171.2L-33002.5 1837.0M1642.8 171.2L-31912.0 1837.0M1650.1 171.2L-30821.5 1837.0M1657.3 171.2L-29731.0 1837.0M1664.6 171.2L-28640.5 1837.0M1671.9 171.2L-27550.0 1837.0M1679.2 171.2L-26459.5 1837.0M1686.4 171.2L-25369.0 1837.0M1693.7 171.2L-24278.5 1837.0M1701.0 171.2L-23188.0 1837.0M1708.2 171.2L-22097.5 1837.0M1715.5 171.2L-21007.0 1837.0M1722.8 171.2L-19916.5 1837.0M1730.0 171.2L-18826.0 1837.0M1737.3 171.2L-17735.5 1837.0M1744.6 171.2L-16645.0 1837.0M1751.8 171.2L-15554.5 1837.0M1759.1 171.2L-14464.0 1837.0M1766.4 171.2L-13373.5 1837.0M1773.7 171.2L-12283.0 1837.0M1780.9 171.2L-11192.5 1837.0M1788.2 171.2L-10102.0 1837.0M1795.5 171.2L-9011.5 1837.0M1802.7 171.2L-7921.0 1837.0M1810.0 171.2L-6830.5 1837.0M1817.3 171.2L-5740.0 1837.0M1824.5 171.2L-4649.5 1837.0M1839.1 171.2L-2468.5 1837.0M1846.4 171.2L-1378.0 1837.0M1853.6 171.2L-287.5 1837.0M1860.9 171.2L803.0 1837.0M1868.2 171.2L1893.5 1837.0M1875.4 171.2L2984.0 1837.0M1882.7 171.2L4074.5 1837.0M1890.0 171.2L5165.0 1837.0M1897.2 171.2L6255.5 1837.0M1904.5 171.2L7346.0 1837.0M1911.8 171.2L8436.5 1837.0" fill="none" stroke="#5f8fa8" stroke-opacity="0.38" stroke-width="1"/></g>
<path d="M806 168 1065 311" stroke="#f23a55" stroke-width="1.200" fill="none" shape-rendering="crispEdges"/>
<path d="M1276 427 1472 535" stroke="#f23a55" stroke-width="1.200" fill="none" shape-rendering="crispEdges"/>
<path d="M1472 282.300 1350 320" stroke="#3b7df5" stroke-width="1.200" fill="none" shape-rendering="crispEdges"/>
<path d="M806 488 868 468.800" stroke="#3b7df5" stroke-width="1.200" fill="none" shape-rendering="crispEdges"/>
<path d="M1170 70 1173 228" stroke="#8fd12a" stroke-width="1.200" fill="none" shape-rendering="crispEdges"/>
<path d="M1180.200 462 1185.300 719" stroke="#8fd12a" stroke-opacity="0.800" stroke-width="1" fill="none" shape-rendering="crispEdges"/>
<path d="M806 266.2 1399 206" stroke="#ff7f0e" stroke-width="1.2" fill="none" shape-rendering="crispEdges"/>
<path d="M1399 206 1470 211.5" stroke="#ff7f0e" stroke-width="1.2" fill="none" shape-rendering="crispEdges"/>
<path d="M1399 206 1373 357" stroke="#ff7f0e" stroke-width="1.2" fill="none" shape-rendering="crispEdges"/>
<path d="M1373 357 1429 377" stroke="#ff7f0e" stroke-width="1.2" fill="none" shape-rendering="crispEdges"/>
<path d="M1373 357 899 540" stroke="#ff7f0e" stroke-width="1.2" fill="none" shape-rendering="crispEdges"/>
<path d="M806 299 899 540" stroke="#ff7f0e" stroke-width="1.2" fill="none" shape-rendering="crispEdges"/>
<path d="M899 540 922 618" stroke="#ff7f0e" stroke-width="1.2" fill="none" shape-rendering="crispEdges"/>
<g shape-rendering="crispEdges">
<polygon points="1388,292 1392.6,292 1396.9,313.5 1396.5,344.6 1383.8,336.8 1376,325.1 1370.2,311.5 1369.2,301.8" fill="#bfae88"/>
<polygon points="1388,292 1369.2,301.8 1370.2,311.5 1376,325.1 1383.8,336.8 1378.5,322 1375.5,306 1380,298" fill="#8e8060"/>
<polygon points="1371.2,288.1 1387.7,267.7 1415,244.9 1427.6,243.4 1406.2,272.6 1392.6,292 1388,291.5" fill="#c4b48e"/>
<polygon points="1371.2,288.1 1387.7,267.7 1415,244.9 1421.5,244.2 1393.5,268.5 1378.5,289" fill="#dccba3"/>
<polygon points="1272.8,267.5 1307.2,226.5 1315.5,227.8 1311,238 1310,257.5 1318,268 1329,277.5" fill="#b9a985"/>
<polygon points="1272.8,267.5 1287.8,252.5 1310,260 1318,268 1329,277.5" fill="#c7b792"/>
<polygon points="1272.8,267.5 1307.2,226.5 1315.5,227.8 1311.5,236.5 1305.5,234.5 1281,265.5" fill="#ead9b0"/>
<polygon points="1131.5,283.8 1212.8,234.5 1231.5,233.8 1222,245 1215,252.5 1214,262 1215,267.5" fill="#b9a985"/>
<polygon points="1131.5,283.8 1212.8,234.5 1231.5,233.8 1190,250 1140,284" fill="#efe0b8"/>
<polygon points="1313.9,360.8 1313,365.7 1304.2,379.3 1305.2,389 1293.5,393 1277.9,393.9" fill="#8a7c60"/>
<polygon points="1304.2,379.3 1305.2,389 1293.5,393 1285,393.5 1298,385" fill="#c4a888"/>
<polygon points="1146.5,461 1174,448 1179,450 1199,448 1191.5,456 1176.5,462.5" fill="#8a7c60"/>
<polygon points="1052.5,438.8 1104,418.5 1194,385 1231,366 1291.5,339.4 1310,330.4 1363.6,301.4 1388,291.7 1366.5,303.4 1336.3,336.5 1313.9,360.8 1277.9,393.9 1258.4,406.6 1199,440 1179,450 1146.5,461 1100,475 1100,467.5" fill="#9fa9a2"/>
<polygon points="1291.5,339.4 1310,330.4 1363.6,301.4 1388,291.7 1366.5,303.4 1336.3,336.5 1313.9,360.8 1282,390" fill="#a8b3ab"/>
<polygon points="1052.5,438.8 1104,418.5 1194,385 1199,440 1179,450 1146.5,461 1100,475 1100,467.5" fill="url(#bel)"/>
<polygon points="882.5,483.8 957.5,471.2 1052.5,438.8 1100,467.5 1100,486 1025,497 970,504 925,496" fill="#7d877f"/>
<polygon points="988.8,385 1065,340 1145,307.5 1202.5,295 1225.3,286.8 1291.5,284.9 1365.5,293.6 1388,291.7 1388,291.7 1363.6,301.4 1310,330.4 1291.5,339.4 1231,366 1194,385 1104,418.5 1052.5,438.8 1020,388.8" fill="#c98f7b"/>
<polygon points="1291.5,284.9 1365.5,293.6 1388,291.7 1363.6,301.4 1310,330.4 1291.5,339.4" fill="#d2967f"/>
<polygon points="1339,289 1365.5,293.6 1388,291.7 1363.6,301.4 1339,314.5" fill="#d99c86"/>
<polygon points="963.8,369.5 1010,340 1042.5,322.5 1065,311 1131,283.8 1215,267.5 1272.8,267.5 1329,277.5 1371.5,287.5 1388,291.7 1365.5,293.6 1291.5,284.9 1225.3,286.8 1202.5,295 1145,307.5 1065,340 988.8,385" fill="#fcbfa9"/>
<polygon points="963.8,369.5 1010,340 1042.5,322.5 1060,343 988.8,385" fill="#f8ad97"/>
<polygon points="1329,277.5 1371.5,287.5 1388,291.7 1365.5,293.6 1300,285.5" fill="#f0ab95"/>
<polygon points="865.5,460 933.8,381.2 950,395.5 957.5,471.2 882.5,483.8" fill="#cbd6ce"/>
<polygon points="950,395.5 1020,388.8 1052.5,438.8 957.5,471.2" fill="#c3cfc7"/>
<polygon points="865.5,460 933.8,381.2 939,386 874,472" fill="#d6dfd8"/>
<polygon points="933.8,381.2 957.5,368.8 950,395.5" fill="#eef3ef"/>
<polygon points="957.5,368.8 963.8,369.5 988.8,385 1020,388.8 950,395.5" fill="#fbfdfb"/>
<path d="M1052.500 439.500Q1080 446 1100 467.500" stroke="#f2f6f3" stroke-width="1.600" fill="none"/>
<polygon points="1102.5,400 1137.5,398.8 1177.5,387 1150,405 1108,415" fill="#a87463"/>
<polygon points="1100,369.5 1136.2,368.8 1137.5,398.8 1102.5,400" fill="#8a7c60"/>
<polygon points="1136.2,368.8 1175,372.5 1177.5,386.2 1137.5,398.8" fill="#b9a985"/>
<polygon points="1100,365 1167.5,362 1190,373.8 1175,372.5 1136.2,368.8 1100,369.5" fill="#f7eec5"/>
</g>
<path d="M806 299.5 1470 211.5" stroke="#ff7f0e" stroke-width="1.2" fill="none" shape-rendering="crispEdges"/>
<path d="M1470 211.5 1429 377" stroke="#ff7f0e" stroke-width="1.2" fill="none" shape-rendering="crispEdges"/>
<path d="M1429 377 922 618" stroke="#ff7f0e" stroke-width="1.2" fill="none" shape-rendering="crispEdges"/>
<path d="M806 327 922 618" stroke="#ff7f0e" stroke-width="1.2" fill="none" shape-rendering="crispEdges"/>
<path d="M1085 468.200 1304 383.600" stroke="#f5820a" stroke-opacity="0.300" stroke-width="1" fill="none"/>
<circle cx="1176" cy="373" r="89" fill="none" stroke="#dfe6e6" stroke-opacity="0.380" stroke-width="1.100"/>
<path d="M1085.0 372.9L1084.9 375.7L1085.3 378.4L1086.0 381.1L1087.1 383.8L1088.6 386.5L1090.5 389.0L1092.7 391.6L1095.3 394.0L1098.2 396.4L1101.4 398.6L1104.9 400.8L1108.8 402.8L1112.9 404.7L1117.3 406.5L1121.9 408.1L1126.8 409.6L1131.9 410.9L1137.1 412.1L1142.5 413.1L1148.1 413.9L1153.8 414.6L1159.6 415.1L1165.4 415.4L1171.3 415.5L1177.2 415.5L1183.1 415.3L1189.0 414.9L1194.8 414.3L1200.5 413.5L1206.1 412.6L1211.7 411.5L1217.0 410.3L1222.2 408.9L1227.2 407.3L1232.0 405.6L1236.5 403.8L1240.8 401.8L1244.8 399.7L1248.5 397.5L1251.9 395.2L1255.0 392.8L1257.8 390.3L1260.2 387.8L1262.3 385.2L1264.0 382.5L1265.3 379.8L1266.3 377.1L1266.9 374.3" fill="none" stroke="#8fd12a" stroke-width="2.600"/>
<path d="M1223.0 295.9L1218.8 293.2L1214.4 290.8L1209.8 288.7L1205.1 287.1L1200.3 285.7L1195.3 284.8L1190.3 284.3L1185.2 284.1L1180.1 284.3L1174.9 284.9L1169.8 285.9L1164.7 287.2L1159.6 289.0L1154.6 291.0L1149.7 293.5L1144.9 296.3L1140.3 299.4L1135.8 302.8L1131.4 306.6L1127.3 310.6L1123.4 314.9L1119.7 319.5L1116.2 324.2L1113.0 329.2L1110.1 334.4L1107.5 339.8L1105.1 345.3L1103.1 350.9L1101.4 356.6L1100.0 362.4L1098.9 368.2L1098.2 374.0L1097.8 379.9L1097.7 385.7L1098.0 391.4L1098.6 397.1L1099.6 402.7L1100.9 408.1L1102.5 413.4L1104.4 418.6L1106.6 423.5L1109.2 428.2L1112.0 432.6L1115.1 436.8L1118.4 440.8L1122.1 444.4L1125.9 447.7L1130.0 450.7" fill="none" stroke="#f23a55" stroke-width="2.100"/>
<path d="M1147.5 287.5L1151.1 285.8L1154.7 284.5L1158.4 283.5L1162.2 282.9L1166.0 282.7L1169.9 282.9L1173.8 283.5L1177.8 284.4L1181.7 285.7L1185.6 287.4L1189.4 289.4L1193.2 291.8L1197.0 294.5L1200.6 297.6L1204.1 301.0L1207.5 304.6L1210.8 308.6L1214.0 312.8L1216.9 317.3L1219.7 322.1L1222.4 327.0L1224.8 332.1L1227.0 337.4L1229.0 342.9L1230.8 348.5L1232.3 354.2L1233.7 359.9L1234.7 365.7L1235.5 371.6L1236.1 377.4L1236.4 383.3L1236.5 389.1L1236.3 394.8L1235.9 400.4L1235.2 405.9L1234.2 411.3L1233.1 416.5L1231.6 421.6L1230.0 426.4L1228.1 431.0L1226.0 435.4L1223.6 439.5L1221.1 443.3L1218.4 446.8L1215.5 450.0L1212.5 452.9L1209.3 455.5L1205.9 457.7" fill="none" stroke="#4585f2" stroke-width="2.100"/>
<polygon points="1140,342.5 1155,341 1155.5,356 1142,358.8" fill="#f23a55"/>
<polygon points="1191.3,342.3 1201.8,347.9 1201.8,362.6 1191.3,356.8" fill="#4585f2"/>
<polygon points="1157.5,391 1172.5,388.8 1178.8,393.8 1166,398" fill="#8fd12a"/>
<path d="M1176 373 1072 404.500" stroke="#4585f2" stroke-width="2.100" fill="none"/>
<polygon points="1041,414 1070.5,396 1075.5,412.5" fill="#4585f2"/>
<path d="M1176 373 1254 416" stroke="#f23a55" stroke-width="2.100" fill="none"/>
<polygon points="1278.9,429.1 1258,407.7 1248.3,421.6" fill="#f2405a"/>
<path d="M1174.300 258 1175.5 373" stroke="#8fd12a" stroke-width="2.300" fill="none"/>
<polygon points="1173,228.5 1166,258.8 1181.5,258.8" fill="#8fd12a"/>
</svg>
<div class="abs" style="left:0;top:0;width:666px;height:2px;background:#40d6ff"></div><div class="abs" style="left:0;top:0;width:2px;height:649px;background:#40d6ff"></div>
<div class="abs" style="left:10px;top:10px;width:104px;height:29px;background:#1a98a6;border-radius:3px"></div>
<svg class="ic" style="left:14px;top:16px" viewBox="0 0 16 16"><g fill="#dfe6e7"><circle cx="8" cy="2.100" r="2"/><circle cx="8" cy="8" r="2"/><circle cx="8" cy="13.900" r="2"/></g></svg>
<span class="t" style="left:34px;top:14px;color:#c7e7ea;letter-spacing:-0.00px">Perspective</span>
</div>
</div>
</body>
</html>
